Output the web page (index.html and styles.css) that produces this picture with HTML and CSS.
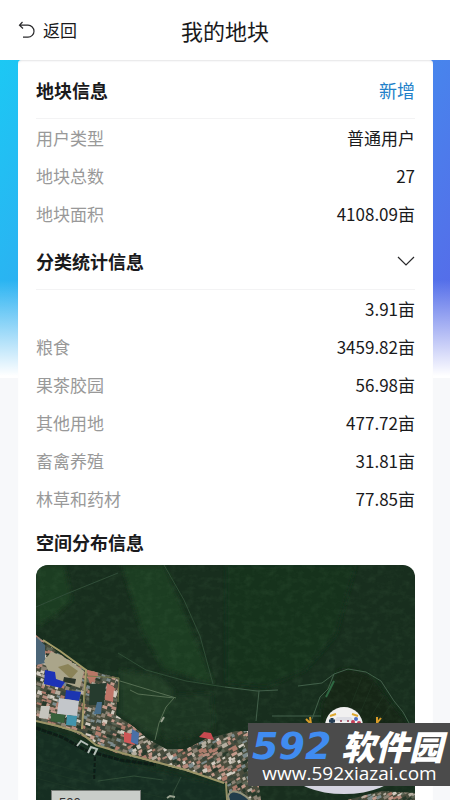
FILE: index.html
```html
<!DOCTYPE html>
<html lang="zh-CN">
<head>
<meta charset="utf-8">
<meta name="viewport" content="width=device-width, initial-scale=1">
<title>我的地块</title>
<link rel="stylesheet" href="styles.css">
</head>
<body>
<div class="app">
  <header class="topbar">
    <a class="back" href="#">
      <svg class="back-icon" viewBox="0 0 18 18" aria-hidden="true"><path d="M4.5 1 1.5 4.2 5 7.5M1.8 4.2H10a6 6 0 0 1 0 12H5"/></svg>
      返回
    </a>
    <h1 class="title">我的地块</h1>
  </header>

  <main class="content">
    <div class="card">
      <section>
        <div class="section-head ruled"><h2>地块信息</h2><button class="add" type="button">新增</button></div>
        <dl class="rows">
          <div class="row"><dt>用户类型</dt><dd>普通用户</dd></div>
          <div class="row"><dt>地块总数</dt><dd>27</dd></div>
          <div class="row"><dt>地块面积</dt><dd>4108.09亩</dd></div>
        </dl>
      </section>
      <section>
        <div class="section-head ruled">
          <h2>分类统计信息</h2>
          <button class="toggle" type="button" aria-label="收起">
            <svg viewBox="0 0 18 10" aria-hidden="true"><path d="M1 1l8 8 8-8"/></svg>
          </button>
        </div>
        <dl class="rows">
          <div class="row"><dt></dt><dd>3.91亩</dd></div>
          <div class="row"><dt>粮食</dt><dd>3459.82亩</dd></div>
          <div class="row"><dt>果茶胶园</dt><dd>56.98亩</dd></div>
          <div class="row"><dt>其他用地</dt><dd>477.72亩</dd></div>
          <div class="row"><dt>畜禽养殖</dt><dd>31.81亩</dd></div>
          <div class="row"><dt>林草和药材</dt><dd>77.85亩</dd></div>
        </dl>
      </section>
      <section>
        <div class="section-head compact"><h2>空间分布信息</h2></div>
        <div class="map">
          <svg class="map-image" viewBox="0 0 379 250" preserveAspectRatio="xMidYMin slice" aria-hidden="true">
            <defs>
              <filter id="grain" x="0" y="0" width="100%" height="100%">
                <feTurbulence type="fractalNoise" baseFrequency="0.12 0.16" numOctaves="4" seed="6"/>
                <feColorMatrix values="0 0 0 0 0.2  0 0 0 0 0.42  0 0 0 0 0.2  0 1.6 0 0 -0.66"/>
              </filter>
              <filter id="soft"><feGaussianBlur stdDeviation="0.5"/></filter>
              <filter id="haze"><feGaussianBlur stdDeviation="2"/></filter>
              <clipPath id="village">
                <path d="M0 70 10 78 28 92 48 104 83 113 80 150 98 162 112 174 130 184 150 184 170 174 189 169 200 166 215 166 225 235 300 238 345 226 379 228V250H202L190 218 150 206 120 198 80 188 56 176 36 166 0 156Z"/>
              </clipPath>
            </defs>
            <rect width="379" height="250" fill="#182e1e"/>
            <g filter="url(#haze)">
              <path d="M0 0H28L36 35 22 48 0 62Z" fill="#1f3c21"/>
              <path d="M86 0H128L178 119 128 104 106 66Z" fill="#1d3c22"/>
              <path d="M84 105 122 110 138 125 136 135 120 172 84 150Z" fill="#223d26"/>
              <path d="M140 130 176 128 178 165 130 177 122 160Z" fill="#1a3620"/>
              <path d="M190 0H320L300 70 270 105 230 122 190 118Z" fill="#19311f"/>
              <path d="M302 105 316 104 336 112 350 132 367 153 379 175 379 215 280 220 286 140Z" fill="#162819"/>
              <path d="M0 165 36 173 90 198 186 220 200 250H0Z" fill="#152e20"/>
            </g>
            <rect width="379" height="250" filter="url(#grain)" opacity="0.12"/>
            <g fill="none" stroke="#42604a" stroke-width="1" filter="url(#soft)">
              <path d="M0 42 30 29 82 8" stroke="#304d38"/>
              <path d="M128 0 148 35 164 71 177 119M82 88 110 105 150 116 189 122" stroke="#2f4d36"/>
              <path d="M189 122 221 126 242 125M262 121 286 118 298 109 312 104 330 107 345 116 358 136 367 147 373 158"/>
              <path d="M223 126 220 156M236 151 285 151M298 109 292 124 284 132 276 154"/>
              <path d="M84 116 140 133M94 125 102 129 138 133 130 142 123 158 119 175" stroke="#566f53"/>
              <path d="M62 216 98 211 127 215M145 212 137 228 139 250" stroke="#304d38"/>
              <path d="M290 132 298 116" stroke="#2f6943" stroke-width="2"/>
            </g>
            <g stroke="#26402b" stroke-width="1" opacity="0.4">
              <path d="M0 195 58 210M0 204 55 219M0 213 48 226M80 222 138 235M142 146 177 140M140 153 177 148M138 160 175 157"/>
              <path d="M310 153 326 112M322 153 337 118M334 153 348 130M346 153 356 138"/>
            </g>
            <g filter="url(#soft)">
              <g clip-path="url(#village)">
                <rect width="379" height="250" fill="#494d3c"/>
                <g id="houses"></g>
                <path d="M0 72 9 80 9 98 0 100Z" fill="#4b6577"/>
                <path d="M54 119 70 118 68 140 53 140Z" fill="#263a2d"/>
                <path d="M8 96 15 87 25 90 48 106 44 123 15 113Z" fill="#aaa58a"/>
                <path d="M22 102 32 99 42 106 35 114Z" fill="#8b8359"/>
                <path d="M28 112 40 114 39 119 27 117Z" fill="#2c342c"/>
                <path d="M9 105 19 107 20 114 29 117 25 123 8 119Z" fill="#1c32b7"/>
                <path d="M30 125 45 127 43 136 29 134Z" fill="#1b35b1"/>
                <path d="M23 133 43 136 41 151 21 149Z" fill="#c3c6ca"/>
                <path d="M15 148 29 150 28 158 15 156Z" fill="#38613a"/>
                <path d="M31 150 41 151 40 161 30 160Z" fill="#4294ac"/>
                <path d="M5 141 14 141 12 154 3 153Z" fill="#c5c4bd"/>
                <path d="M51 104 61 103 62 111 54 119 52 113Z" fill="#b87766"/>
                <path d="M71 118 78 122 77 137 69 135Z" fill="#bf7468"/>
                <path d="M88 167 96 169 99 180 88 177Z" fill="#ce5757"/>
                <path d="M96 164 103 168 102 180 95 177Z" fill="#496fa7"/>
                <path d="M61 137 66 137 65 149 58 149Z" fill="#4a6e8a"/>
              </g>
              <path d="M163 172 168 167 175 168 178 175Z" fill="#c64850"/>
              <g fill="none">
                <path d="M7 75 24 86 50 105 49 120 46 164" stroke="#a59d69" stroke-width="2"/>
                <path d="M0 156 22 161 45 168 60 180 86 188 120 197 150 205 188 218" stroke="#9b9567" stroke-width="2"/>
                <path d="M52 111 83 113 82 137M51 109 47 145" stroke="#777b4e"/>
                <path d="M0 163 26 172 49 185 84 195 120 200" stroke="#0c1c16" stroke-width="3" stroke-dasharray="5 1"/>
                <path d="M59 192 58 216" stroke="#0b1c15" stroke-width="2" stroke-dasharray="4 2"/>
                <path d="M41 181 45 176 52 180M52 188 55 182 61 184 58 190" stroke="#b6c0b9" stroke-width="2"/>
                <path d="M190 218 192 250" stroke="#959165" stroke-width="2"/>
              </g>
              <path d="M192 231C195 221 212 228 223 247L218 250H197Z" fill="#233e4b" stroke="#929279" stroke-width="2"/>
              <path d="M125 157 128 152M131 233 134 231 139 232" fill="none" stroke="#9aa290" stroke-width="2"/>
            </g>
          </svg>
          <div class="scale">500 m</div>
        </div>
      </section>
    </div>
  </main>

  <div class="watermark">
    <svg class="mascot" viewBox="0 0 94 94" aria-hidden="true">
      <ellipse cx="47" cy="69" rx="51" ry="21" fill="#d5d4e0"/>
      <circle cx="47" cy="22" r="19" fill="#f1f0f0"/>
      <path d="M33 12 39 10M55 10 61 12" stroke="#dda72d" stroke-width="2"/>
      <path d="M40 13H54L57 17H37Z" fill="#dedee4"/>
      <path d="M35 14V20M32 17H38" stroke="#263e54" stroke-width="3"/>
      <circle cx="44" cy="17" r="1" fill="#98344a"/><circle cx="51" cy="17" r="1" fill="#98344a"/>
      <circle cx="59" cy="15" r="2" fill="#4a6bc1"/><circle cx="56" cy="18" r="2" fill="#c63e57"/><circle cx="62" cy="19" r="2" fill="#c63e57"/>
      <path d="M9 15 13 19M13 13 14 20M84 14 80 19M80 13 80 19" stroke="#d99c28" stroke-width="2"/>
    </svg>
    <div class="watermark-box">
      <div class="brand"><span class="brand-number">592</span><span class="brand-name">软件园</span></div>
      <div class="site">www.592xiazai.com</div>
    </div>
  </div>
</div>
<script src="map.js"></script>
</body>
</html>
```
FILE: styles.css
```css
* {
  box-sizing: border-box;
}

body,
h1,
h2,
dl,
dd {
  margin: 0;
}

body {
  background: #f7f8fa;
  color: #1a1a1c;
  font-family: "Noto Sans CJK SC", sans-serif;
  font-size: 17px;
}

button {
  padding: 0;
  border: 0;
  background: none;
  font: inherit;
}

.app {
  position: relative;
  display: flex;
  flex-direction: column;
  height: 100vh;
  overflow: hidden;
}

.topbar {
  display: grid;
  grid-template-columns: 1fr auto 1fr;
  align-items: center;
  flex: none;
  height: 60px;
  padding: 0 18px;
  background: #fff;
}

.back {
  display: flex;
  align-items: center;
  gap: 7px;
  color: inherit;
  font-size: 17px;
  line-height: 24px;
  text-decoration: none;
}

.back-icon {
  width: 18px;
  height: 18px;
}

.back-icon path,
.toggle path {
  fill: none;
  stroke: #29292b;
  stroke-width: 1.2;
}

.title {
  font-size: 22px;
  font-weight: 400;
  line-height: 28px;
}

.content {
  flex: 1;
  min-height: 0;
  padding: 0 17px 0 18px;
  background:
    linear-gradient(180deg, transparent 220px, #fff 316px) 0 0 / 100% 318px no-repeat,
    linear-gradient(120deg, #1cc8f4, #3c98ef 50%, #5a65e8) 0 0 / 100% 318px no-repeat,
    #f7f8fa;
}

.card {
  padding: 2px 18px 18px;
  border-radius: 4px 4px 0 0;
  background: #fff;
  box-shadow: inset 0 2px 2px -1px #e4e4e6;
}

.section-head {
  display: flex;
  align-items: center;
  justify-content: space-between;
  height: 57px;
}

.section-head.ruled {
  border-bottom: 1px solid #f3f3f4;
}

.section-head.compact {
  height: 47px;
}

h2 {
  font-size: 18px;
  font-weight: 700;
  line-height: 26px;
}

.add {
  color: #2381c9;
  font-size: 18px;
  line-height: 26px;
}

.toggle {
  display: flex;
}

.toggle svg {
  width: 18px;
  height: 10px;
}

.row {
  display: flex;
  justify-content: space-between;
  line-height: 38px;
}

dt {
  color: #999;
}

.map {
  position: relative;
  overflow: hidden;
  border-radius: 12px;
  aspect-ratio: 379 / 250;
}

.map-image {
  display: block;
  width: 100%;
  height: 100%;
}

.scale {
  position: absolute;
  bottom: 0;
  left: 15px;
  width: 90px;
  padding: 0 7px;
  border: 1px solid #777b77;
  background: #c9cdc9;
  color: #333;
  font-family: "Liberation Sans", sans-serif;
  font-size: 13px;
  line-height: 23px;
}

.watermark {
  position: absolute;
  right: 0;
  bottom: 14px;
  width: 202px;
}

.watermark-box {
  position: relative;
  height: 63px;
  padding: 6px 3px 0 4px;
  background: #4b4b4b;
  color: #fff;
}

.mascot {
  position: absolute;
  bottom: -12px;
  left: 49px;
  width: 94px;
  height: 94px;
  overflow: visible;
}

.brand {
  display: flex;
  align-items: center;
  justify-content: space-between;
  height: 33px;
  font-style: italic;
  font-weight: 900;
}

.brand-number {
  color: #408cf0;
  font-family: "DejaVu Sans", sans-serif;
  font-size: 38px;
  line-height: 32px;
}

.brand-name {
  padding-right: 4px;
  font-size: 34px;
  line-height: 32px;
}

.site {
  font-family: "Open Sans", sans-serif;
  font-size: 19px;
  font-weight: 400;
  line-height: 22px;
  text-align: center;
}
```
FILE: map.js
```js
// Scatter rooftops over the village; the clip path keeps them inside its outline.
const SVG_NS = "http://www.w3.org/2000/svg";
const roofs = ["#b5aea0", "#8c8374", "#d1cbc0", "#ae7b6c", "#5d6656", "#39453a", "#7c8b8c", "#c39a8b", "#25382b", "#b58a7c"];
let seed = 42;

function random() {
  seed = (seed * 16807) % 2147483647;
  return seed / 2147483647;
}

const houses = document.getElementById("houses");
for (let y = 68; y < 250; y += 4) {
  for (let x = 0; x < 379; x += 5) {
    const roof = document.createElementNS(SVG_NS, "rect");
    const left = x + Math.round(random() * 2);
    const top = y + Math.round(random() * 2);
    roof.setAttribute("x", left);
    roof.setAttribute("y", top);
    roof.setAttribute("width", 3 + Math.round(random() * 3));
    roof.setAttribute("height", 2 + Math.round(random() * 2));
    roof.setAttribute("fill", roofs[Math.floor(random() * roofs.length)]);
    roof.setAttribute("transform", `rotate(${x < 90 ? 18 : -28} ${left} ${top})`);
    houses.append(roof);
  }
}
```
